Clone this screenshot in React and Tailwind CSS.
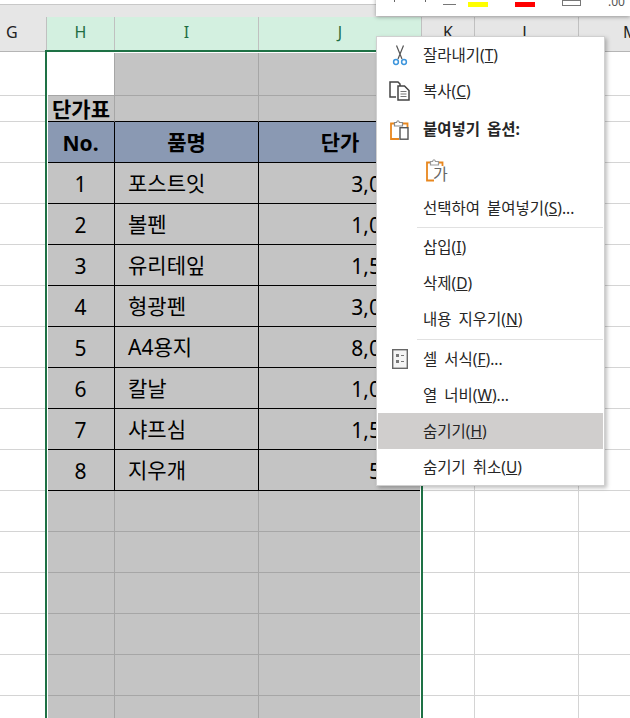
import React from 'react';

const rows = [
  ['1', '포스트잇', '3,000'],
  ['2', '볼펜', '1,000'],
  ['3', '유리테잎', '1,500'],
  ['4', '형광펜', '3,000'],
  ['5', 'A4용지', '8,000'],
  ['6', '칼날', '1,000'],
  ['7', '샤프심', '1,500'],
  ['8', '지우개', '500'],
];

const font = "font-['Noto_Sans','Noto_Sans_CJK_KR',sans-serif]";

function OuterRow({ h, children }) {
  return (
    <div className={`flex ${h}`}>
      <div className="w-[47px] shrink-0 border-b border-[#d4d4d4]" />
      <div className="flex w-[374px] shrink-0">{children}</div>
      <div className="w-[54px] shrink-0 border-b border-r border-[#d4d4d4]" />
      <div className="w-[104px] shrink-0 border-b border-r border-[#d4d4d4]" />
      <div className="flex-1 border-b border-[#d4d4d4]" />
    </div>
  );
}

function Blank() {
  return (
    <OuterRow h="h-[41px]">
      <div className="w-[68px] border-b border-r border-[#a6a6a6] bg-[#c4c4c4]" />
      <div className="w-[144px] border-b border-r border-[#a6a6a6] bg-[#c4c4c4]" />
      <div className="flex-1 border-b border-[#a6a6a6] bg-[#c4c4c4]" />
    </OuterRow>
  );
}

function ColHead({ w, label, on }) {
  return (
    <div className={`flex h-full shrink-0 items-center justify-center border-r border-[#c0c0c0] pb-[4px] text-[16px] ${w} ${on ? 'bg-[#d3f0e0] text-[#1f6e43]' : 'text-[#222]'}`}>
      {label}
    </div>
  );
}

function MenuItem({ icon, label, mnemonic, rest = '', bold, active, h = 'h-[36px]' }) {
  return (
    <div className={`flex items-center text-[15.5px] text-[#262626] ${h} ${active ? 'bg-[#d0cecd]' : ''}`}>
      <div className="flex w-[45px] shrink-0 items-center justify-center pr-[2px]">{icon}</div>
      <span className={`whitespace-pre pt-[1px] [word-spacing:3px] ${bold ? 'font-bold' : ''}`}>
        {label}
        {mnemonic && <>(<span className="underline">{mnemonic}</span>){rest}</>}
      </span>
    </div>
  );
}

function Separator({ h }) {
  return (
    <div className={`flex items-center pl-[39px] ${h}`}>
      <div className="h-px w-full bg-[#e1e1e1]" />
    </div>
  );
}

function CutIcon() {
  return (
    <svg width="16" height="21" viewBox="0 0 16 21" fill="none">
      <path d="M4.5 0.5 L10 14 M11.5 0.5 L6 14" stroke="#555" strokeWidth="1.2" />
      <circle cx="4" cy="17" r="2.4" stroke="#3d95dc" strokeWidth="1.5" />
      <circle cx="12" cy="17" r="2.4" stroke="#3d95dc" strokeWidth="1.5" />
    </svg>
  );
}

function CopyIcon() {
  return (
    <svg width="21" height="20" viewBox="0 0 21 20" fill="none">
      <path d="M7 16 H1 V1 H9 L11 3 V5" stroke="#444" strokeWidth="1.5" />
      <path d="M9 5 H15.5 L20 9.5 V19 H9 Z" fill="#fff" stroke="#444" strokeWidth="1.5" />
      <path d="M11.5 10.5 H17.5 M11.5 13 H17.5 M11.5 15.5 H17.5" stroke="#777" />
    </svg>
  );
}

function PasteIcon() {
  return (
    <svg width="19" height="21" viewBox="0 0 19 21" fill="none">
      <path d="M4 4.5 H1 V20 H9 M13 4.5 H17.5 V8" stroke="#e8871e" strokeWidth="1.8" />
      <path d="M4.5 7 V3.5 H6.5 Q8 0 9.5 3.5 H12.5 V7 Z" fill="#fff" stroke="#888" strokeWidth="1.2" />
      <rect x="10" y="8.7" width="8" height="11.5" fill="#fff" stroke="#555" strokeWidth="1.4" />
    </svg>
  );
}

function PasteTextIcon() {
  return (
    <div className="relative ml-[3px] h-[24px] w-[22px]">
      <svg width="18" height="24" viewBox="0 0 18 24" fill="none">
        <path d="M4 4.5 H1 V22.5 H8 M13 4.5 H16.5 V8" stroke="#e8871e" strokeWidth="1.8" />
        <path d="M4.5 7 V3.5 H6.5 Q8 0 9.5 3.5 H12.5 V7 Z" fill="#fff" stroke="#999" strokeWidth="1.2" />
      </svg>
      <span className="absolute left-[7px] top-[8px] text-[16px] leading-[16px] text-[#666]">가</span>
    </div>
  );
}

function FormatIcon() {
  return (
    <svg width="16" height="20" viewBox="0 0 16 20" fill="none">
      <rect x="0.7" y="0.7" width="14.6" height="18.6" fill="#f4f4f4" stroke="#666" strokeWidth="1.4" />
      <rect x="4" y="5" width="3" height="3" fill="#777" />
      <rect x="4" y="11" width="3" height="3" fill="#777" />
      <path d="M9 6.5 H12 M9 12.5 H12" stroke="#777" />
    </svg>
  );
}

export default function App() {
  return (
    <div className={`relative h-[718px] w-[630px] overflow-hidden bg-white ${font}`}>
      {/* ribbon gap */}
      <div className="h-[5px] border-b border-[#c8c8c8] bg-white" />
      <div className="h-[12px] bg-[#e6e6e6]" />

      {/* column headers */}
      <div className="flex h-[35px] border-b border-[#b5b5b5] bg-[#e6e6e6]">
        <div className="flex w-[47px] shrink-0 items-center border-r border-[#c0c0c0] pb-[4px] pl-[6px] text-[16px] text-[#222]">G</div>
        <ColHead w="w-[68px]" label="H" on />
        <ColHead w="w-[144px]" label="I" on />
        <ColHead w="w-[163px]" label="J" on />
        <ColHead w="w-[53px]" label="K" />
        <ColHead w="w-[104px]" label="L" />
        <div className="flex min-w-0 flex-1 items-center overflow-hidden pb-[4px] pl-[44px] text-[16px] text-[#222]">M</div>
      </div>

      {/* sheet */}
      <OuterRow h="h-[44px]">
        <div className="w-[68px] border-b border-r border-[#a6a6a6] bg-white" />
        <div className="w-[144px] border-b border-r border-[#a6a6a6] bg-[#c4c4c4]" />
        <div className="flex-1 border-b border-[#a6a6a6] bg-[#c4c4c4]" />
      </OuterRow>
      <OuterRow h="h-[26px]">
        <div className="flex w-[68px] items-center whitespace-nowrap border-b border-r border-b-black border-r-[#a6a6a6] bg-[#c4c4c4] pl-[5px] pt-[2px] text-[21px] font-bold text-black">단가표</div>
        <div className="w-[144px] border-b border-r border-b-black border-r-[#a6a6a6] bg-[#c4c4c4]" />
        <div className="flex-1 border-b border-black bg-[#c4c4c4]" />
      </OuterRow>
      <OuterRow h="h-[41px]">
        <div className="flex w-[68px] items-center justify-center border-b border-r border-black bg-[#8a99b3] pt-[4px] text-[21px] font-bold text-black">No.</div>
        <div className="flex w-[144px] items-center justify-center border-b border-r border-black bg-[#8a99b3] pt-[2px] text-[21px] font-bold text-black">품명</div>
        <div className="flex flex-1 items-center justify-center border-b border-black bg-[#8a99b3] pt-[2px] text-[21px] font-bold text-black">단가</div>
      </OuterRow>
      {rows.map(([no, name, price]) => (
        <OuterRow key={no} h="h-[41px]">
          <div className="flex w-[68px] items-center justify-center border-b border-r border-black bg-[#c4c4c4] pt-[3px] text-[21px] text-black">{no}</div>
          <div className="flex w-[144px] items-center border-b border-r border-black bg-[#c4c4c4] pl-[13px] pt-[2px] text-[21px] text-black">{name}</div>
          <div className="flex flex-1 items-center justify-end border-b border-black bg-[#c4c4c4] pr-[16px] pt-[3px] text-[21px] text-black">{price}</div>
        </OuterRow>
      ))}
      <Blank />
      <Blank />
      <Blank />
      <Blank />
      <Blank />
      <Blank />

      {/* selection outline */}
      <div className="pointer-events-none absolute left-[45px] top-[50px] h-[680px] w-[378px] border-2 border-[#1e7145] shadow-[inset_0_0_0_1px_#fff]" />

      {/* mini toolbar, cut off at the top */}
      <div className="absolute left-[376px] top-[-30px] h-[46px] w-[254px] overflow-hidden bg-white shadow-[0_1px_4px_rgba(0,0,0,0.35)]">
        <div className="absolute bottom-[14px] left-[18px] h-[6px] w-px bg-[#666]" />
        <div className="absolute bottom-[14px] left-[49px] h-[4px] w-px bg-[#666]" />
        <div className="absolute bottom-[11px] left-[67px] h-px w-[13px] bg-[#777]" />
        <div className="absolute bottom-[9px] left-[92px] h-[5px] w-[20px] bg-[#ffff00]" />
        <div className="absolute bottom-[9px] left-[139px] h-[5px] w-[20px] bg-[#ff0000]" />
        <div className="absolute bottom-[10px] left-[186px] h-[6px] w-[19px] border border-[#777]" />
        <span className="absolute bottom-[8px] left-[232px] text-[12px] leading-[12px] text-[#555]">.00</span>
      </div>

      {/* context menu */}
      <div className="absolute left-[376px] top-[36px] w-[229px] border border-[#d0d0d0] bg-white px-[1px] shadow-[2px_2px_4px_rgba(0,0,0,0.25)]">
        <MenuItem icon={<CutIcon />} label="잘라내기" mnemonic="T" />
        <MenuItem icon={<CopyIcon />} label="복사" mnemonic="C" />
        <MenuItem h="h-[40px]" icon={<PasteIcon />} label="붙여넣기 옵션:" bold />
        <div className="flex h-[41px] items-center pl-[45px]">
          <PasteTextIcon />
        </div>
        <MenuItem label="선택하여 붙여넣기" mnemonic="S" rest="..." />
        <Separator h="h-[3px]" />
        <MenuItem label="삽입" mnemonic="I" />
        <MenuItem label="삭제" mnemonic="D" />
        <MenuItem label="내용 지우기" mnemonic="N" />
        <Separator h="h-[4px]" />
        <MenuItem icon={<FormatIcon />} label="셀 서식" mnemonic="F" rest="..." />
        <MenuItem label="열 너비" mnemonic="W" rest="..." />
        <MenuItem label="숨기기" mnemonic="H" active />
        <MenuItem label="숨기기 취소" mnemonic="U" />
      </div>
    </div>
  );
}
